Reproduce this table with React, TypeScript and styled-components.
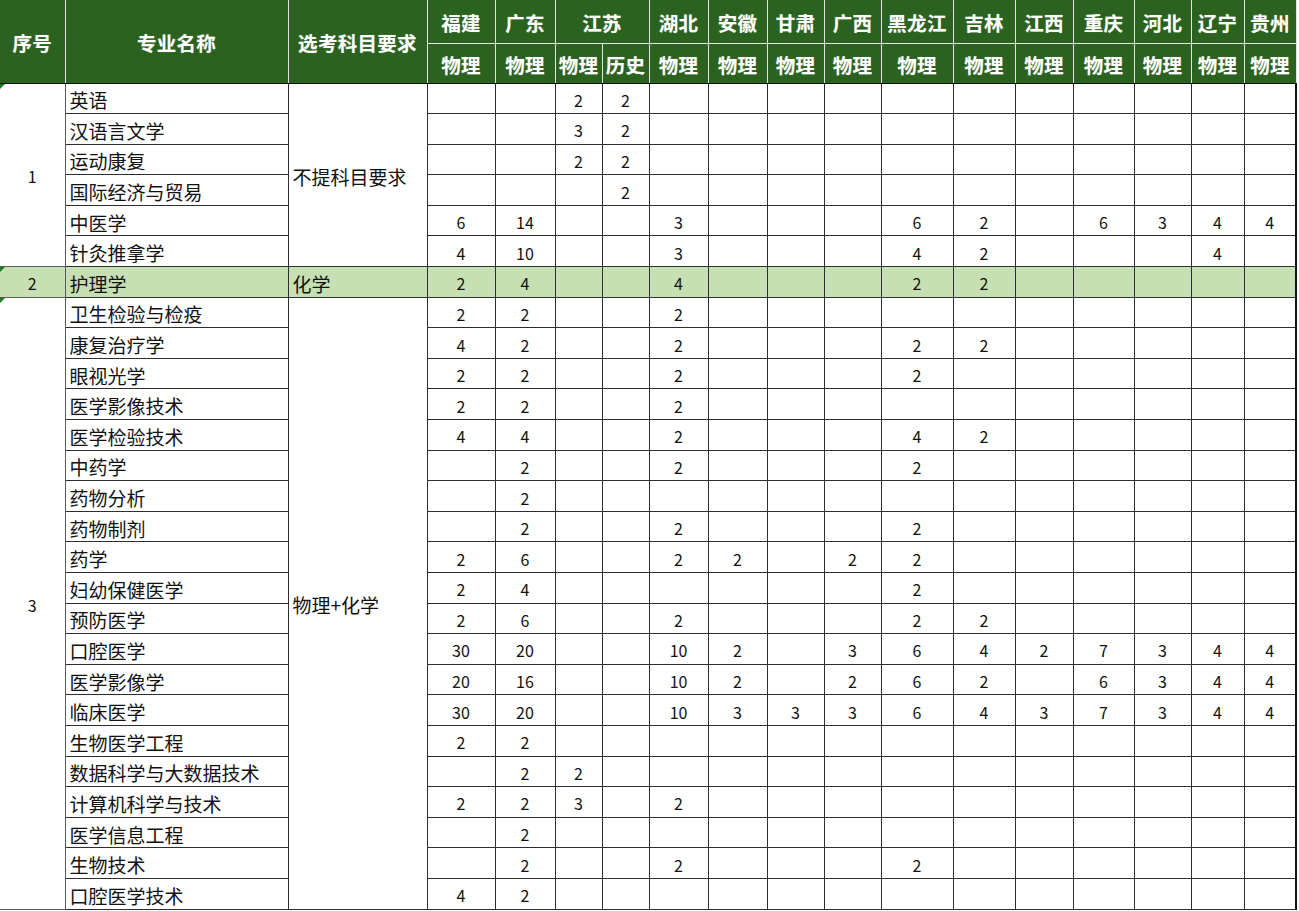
import styled, { createGlobalStyle, css } from 'styled-components';

const GlobalStyle = createGlobalStyle`
  html, body {
    margin: 0;
    padding: 0;
    background: #ffffff;
  }
  body {
    font-family: "Noto Sans CJK SC", "Noto Sans", sans-serif;
    color: #111;
  }
`;

const PROVINCES = [
  { name: '福建', subjects: ['物理'] },
  { name: '广东', subjects: ['物理'] },
  { name: '江苏', subjects: ['物理', '历史'] },
  { name: '湖北', subjects: ['物理'] },
  { name: '安徽', subjects: ['物理'] },
  { name: '甘肃', subjects: ['物理'] },
  { name: '广西', subjects: ['物理'] },
  { name: '黑龙江', subjects: ['物理'] },
  { name: '吉林', subjects: ['物理'] },
  { name: '江西', subjects: ['物理'] },
  { name: '重庆', subjects: ['物理'] },
  { name: '河北', subjects: ['物理'] },
  { name: '辽宁', subjects: ['物理'] },
  { name: '贵州', subjects: ['物理'] },
];

// widths of the 18 columns, in px
const COL_WIDTHS = [65, 223, 139, 68, 60, 47, 47, 59, 59, 57, 57, 72, 62, 58, 61, 57, 53, 52];

type Group = {
  id: string;
  requirement: string;
  highlight?: boolean;
  rows: [string, string][];
};

// each row: name, then 15 comma separated counts (blank = no plan)
const GROUPS: Group[] = [
  {
    id: '1',
    requirement: '不提科目要求',
    rows: [
      ['英语', ',,2,2,,,,,,,,,,,'],
      ['汉语言文学', ',,3,2,,,,,,,,,,,'],
      ['运动康复', ',,2,2,,,,,,,,,,,'],
      ['国际经济与贸易', ',,,2,,,,,,,,,,,'],
      ['中医学', '6,14,,,3,,,,6,2,,6,3,4,4'],
      ['针灸推拿学', '4,10,,,3,,,,4,2,,,,4,'],
    ],
  },
  {
    id: '2',
    requirement: '化学',
    highlight: true,
    rows: [['护理学', '2,4,,,4,,,,2,2,,,,,']],
  },
  {
    id: '3',
    requirement: '物理+化学',
    rows: [
      ['卫生检验与检疫', '2,2,,,2,,,,,,,,,,'],
      ['康复治疗学', '4,2,,,2,,,,2,2,,,,,'],
      ['眼视光学', '2,2,,,2,,,,2,,,,,,'],
      ['医学影像技术', '2,2,,,2,,,,,,,,,,'],
      ['医学检验技术', '4,4,,,2,,,,4,2,,,,,'],
      ['中药学', ',2,,,2,,,,2,,,,,,'],
      ['药物分析', ',2,,,,,,,,,,,,,'],
      ['药物制剂', ',2,,,2,,,,2,,,,,,'],
      ['药学', '2,6,,,2,2,,2,2,,,,,,'],
      ['妇幼保健医学', '2,4,,,,,,,2,,,,,,'],
      ['预防医学', '2,6,,,2,,,,2,2,,,,,'],
      ['口腔医学', '30,20,,,10,2,,3,6,4,2,7,3,4,4'],
      ['医学影像学', '20,16,,,10,2,,2,6,2,,6,3,4,4'],
      ['临床医学', '30,20,,,10,3,3,3,6,4,3,7,3,4,4'],
      ['生物医学工程', '2,2,,,,,,,,,,,,,'],
      ['数据科学与大数据技术', ',2,2,,,,,,,,,,,,'],
      ['计算机科学与技术', '2,2,3,,2,,,,,,,,,,'],
      ['医学信息工程', ',2,,,,,,,,,,,,,'],
      ['生物技术', ',2,,,2,,,,2,,,,,,'],
      ['口腔医学技术', '4,2,,,,,,,,,,,,,'],
    ],
  },
];

const LINE = '#2e2e2e';
const HEAD_LINE = '#e4e4e4';

const Sheet = styled.table`
  border-collapse: collapse;
  table-layout: fixed;
  width: 1297px;
`;

const HeadCell = styled.th<{ $bottom?: boolean; $first?: boolean }>`
  background: #2b6220;
  color: #ffffff;
  font-size: 19.5px;
  font-weight: 700;
  letter-spacing: 0.3px;
  text-align: center;
  vertical-align: middle;
  padding: 3px 0 0;
  white-space: nowrap;
  text-shadow: 0 0 1px rgba(255, 255, 255, 0.35);
  border: 1px solid ${HEAD_LINE};
  border-top: none;
  ${(p) => p.$first && css`border-left: none;`}
  ${(p) => p.$bottom && css`border-bottom: 1px solid #111;`}
`;

const HeadRow = styled.tr<{ $h: number }>`
  height: ${(p) => p.$h}px;
`;

const BodyRow = styled.tr<{ $highlight?: boolean }>`
  height: 30.6px;
  background: ${(p) => (p.$highlight ? '#c6e0b4' : '#ffffff')};
`;

const Cell = styled.td`
  border: 1px solid ${LINE};
  font-size: 19px;
  line-height: 1;
  vertical-align: middle;
  padding: 3px 0 0;
  white-space: nowrap;
  overflow: hidden;
`;

const IdCell = styled(Cell)<{ $flag?: boolean }>`
  position: relative;
  border-left: none;
  text-align: center;
  font-size: 16px;
  border-color: #5a5a5a;

  ${(p) =>
    p.$flag &&
    css`
      &::before {
        content: '';
        position: absolute;
        top: 0;
        left: 0;
        border-top: 5px solid #1f7a1f;
        border-right: 5px solid transparent;
      }
    `}
`;

const TextCell = styled(Cell)`
  text-align: left;
  padding-left: 4px;
`;

const NumCell = styled(Cell)<{ $last?: boolean }>`
  text-align: center;
  font-size: 16px;
  ${(p) => p.$last && css`border-right: 2px solid #111;`}
`;

const totalCols = PROVINCES.reduce((n, p) => n + p.subjects.length, 0);

export default function App() {
  return (
    <>
      <GlobalStyle />
      <Sheet>
        <colgroup>
          {COL_WIDTHS.map((w, i) => (
            <col key={i} style={{ width: w }} />
          ))}
        </colgroup>
        <thead>
          <HeadRow $h={43}>
            <HeadCell rowSpan={2} $first $bottom>
              序号
            </HeadCell>
            <HeadCell rowSpan={2} $bottom>
              专业名称
            </HeadCell>
            <HeadCell rowSpan={2} $bottom>
              选考科目要求
            </HeadCell>
            {PROVINCES.map((p) => (
              <HeadCell key={p.name} colSpan={p.subjects.length}>
                {p.name}
              </HeadCell>
            ))}
          </HeadRow>
          <HeadRow $h={40}>
            {PROVINCES.flatMap((p) =>
              p.subjects.map((s) => (
                <HeadCell key={p.name + s} $bottom>
                  {s}
                </HeadCell>
              ))
            )}
          </HeadRow>
        </thead>
        <tbody>
          {GROUPS.flatMap((g) =>
            g.rows.map(([name, counts], i) => {
              const values = counts.split(',');
              return (
                <BodyRow key={g.id + name} $highlight={g.highlight}>
                  {i === 0 && (
                    <IdCell rowSpan={g.rows.length} $flag>
                      {g.id}
                    </IdCell>
                  )}
                  <TextCell>{name}</TextCell>
                  {i === 0 && <TextCell rowSpan={g.rows.length}>{g.requirement}</TextCell>}
                  {values.map((v, j) => (
                    <NumCell key={j} $last={j === totalCols - 1}>
                      {v}
                    </NumCell>
                  ))}
                </BodyRow>
              );
            })
          )}
        </tbody>
      </Sheet>
    </>
  );
}
